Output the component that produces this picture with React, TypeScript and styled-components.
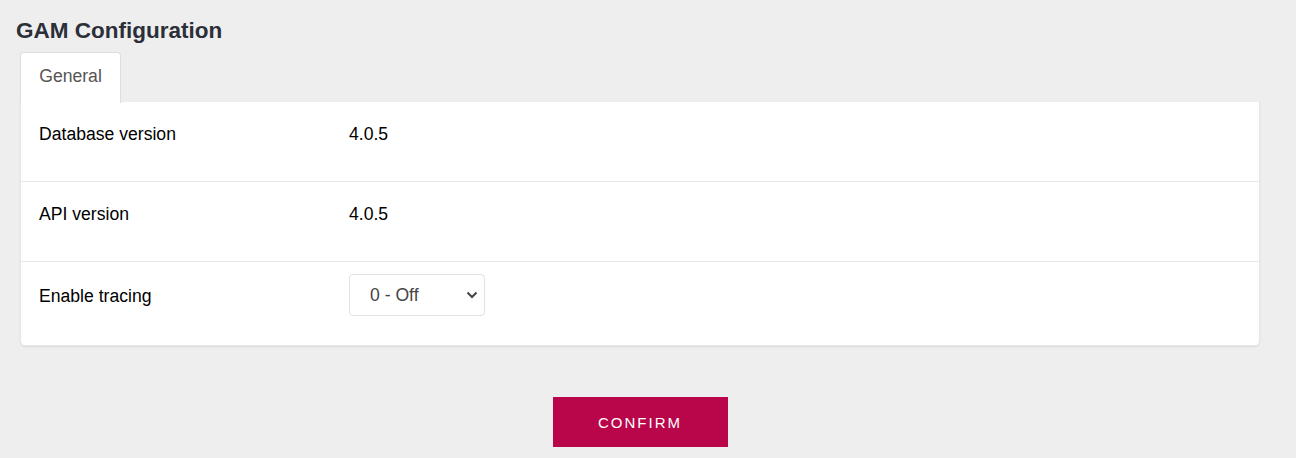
import React, { useState } from 'react'
import styled, { createGlobalStyle } from 'styled-components'

const GlobalStyle = createGlobalStyle`
    body {
        margin: 0;
        background: #eeeeee;
        font-family: "Liberation Sans", Arial, sans-serif;
    }
`

const rows = [
    { label: 'Database version', value: '4.0.5' },
    { label: 'API version', value: '4.0.5' },
]

const App: React.FC = () => {
    const [tracing, setTracing] = useState('0')

    return (
        <Page>
            <GlobalStyle />
            <Title>GAM Configuration</Title>
            <Panel>
                <Tabs>
                    <Tab>General</Tab>
                </Tabs>
                <Card>
                    {rows.map((row) => (
                        <Row key={row.label}>
                            <Label>{row.label}</Label>
                            <Value>{row.value}</Value>
                        </Row>
                    ))}
                    <Row last>
                        <Label tall>Enable tracing</Label>
                        <Value tall>
                            <Select value={tracing} onChange={(e) => setTracing(e.target.value)}>
                                <option value="0">0 - Off</option>
                                <option value="1">1 - Low</option>
                                <option value="2">2 - Medium</option>
                                <option value="3">3 - High</option>
                            </Select>
                        </Value>
                    </Row>
                </Card>
                <Actions>
                    <ConfirmButton>Confirm</ConfirmButton>
                </Actions>
            </Panel>
        </Page>
    )
}

const Page = styled.div`
    padding: 18px 36px 0 16px;
    color: #000;
`

const Title = styled.h1`
    margin: 0 0 8px;
    font-size: 22.5px;
    line-height: 26px;
    font-weight: bold;
    color: #2b2f38;
`

const Panel = styled.div`
    margin-left: 4px;
`

const Tabs = styled.div`
    display: flex;
`

const Tab = styled.div`
    width: 101px;
    height: 51px;
    box-sizing: border-box;
    display: flex;
    align-items: center;
    justify-content: center;
    padding-bottom: 3px;
    background: #fff;
    border: 1px solid #dddddd;
    border-bottom: none;
    border-radius: 4px 4px 0 0;
    font-size: 17.6px;
    color: #555;
    margin-bottom: -1px;
    position: relative;
    z-index: 1;
`

const Card = styled.div`
    background: #fff;
    border-radius: 0 0 5px 5px;
    box-shadow: 0 1px 2px rgba(0, 0, 0, 0.08);
    border: 1px solid #e6e6e6;
    border-top: none;
`

const Row = styled.div<{ last?: boolean }>`
    display: grid;
    grid-template-columns: 310px 1fr;
    box-sizing: border-box;
    height: ${(p) => (p.last ? '83px' : '80px')};
    padding: ${(p) => (p.last ? '12px' : '14px')} 18px 0;
    border-bottom: ${(p) => (p.last ? 'none' : '1px solid #e8e8e8')};
`

const Label = styled.div<{ tall?: boolean }>`
    font-size: 17.6px;
    line-height: ${(p) => (p.tall ? '42px' : '36px')};
    padding-top: ${(p) => (p.tall ? '1px' : '0')};
`

const Value = styled.div<{ tall?: boolean }>`
    font-size: 17.6px;
    line-height: ${(p) => (p.tall ? '42px' : '36px')};
`

const Select = styled.select`
    appearance: none;
    display: block;
    width: 136px;
    height: 42px;
    padding: 0 30px 0 20px;
    font-family: "Liberation Sans", Arial, sans-serif;
    font-size: 17.6px;
    color: #444;
    background: #fff url("data:image/svg+xml,%3Csvg xmlns='http://www.w3.org/2000/svg' width='12' height='8' viewBox='0 0 12 8'%3E%3Cpath d='M1.5 1.5l4.5 4.5 4.5-4.5' fill='none' stroke='%23444' stroke-width='2'/%3E%3C/svg%3E") no-repeat right 6px center;
    border: 1px solid #e2e2e2;
    border-radius: 4px;
    outline: none;
`

const Actions = styled.div`
    display: flex;
    justify-content: center;
    margin-top: 51px;
`

const ConfirmButton = styled.button`
    width: 175px;
    height: 50px;
    border: none;
    background: #b9064a;
    color: #fff;
    font-family: "Liberation Sans", Arial, sans-serif;
    font-size: 15px;
    letter-spacing: 2px;
    text-transform: uppercase;
    cursor: pointer;
`

export default App
